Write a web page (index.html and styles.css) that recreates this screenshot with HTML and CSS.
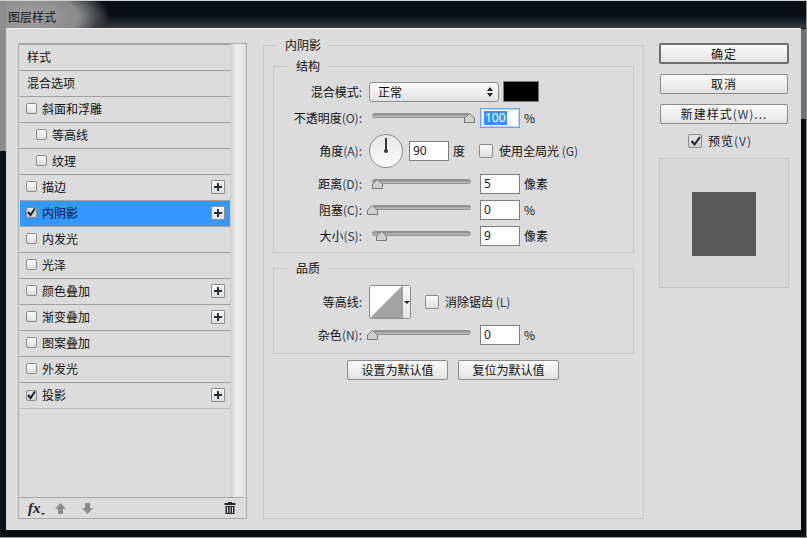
FILE: index.html
```html
<!DOCTYPE html>
<html lang="zh">
<head>
<meta charset="utf-8">
<title>图层样式</title>
<link rel="stylesheet" href="styles.css">
</head>
<body>
<div class="window">
  <div class="titlebar"><span class="title">图层样式</span></div>
  <div class="dialog">
    <aside class="left">
      <div class="list-wrap">
        <ul class="list">
          <li class="row"><span class="t">样式</span></li>
          <li class="row"><span class="t">混合选项</span></li>
          <li class="row"><i class="cb"></i><span>斜面和浮雕</span></li>
          <li class="row sub"><i class="cb"></i><span>等高线</span></li>
          <li class="row sub"><i class="cb"></i><span>纹理</span></li>
          <li class="row"><i class="cb"></i><span>描边</span><b class="plus"></b></li>
          <li class="row active"><i class="cb on"><svg viewBox="0 0 11 11"><path d="M2 5l2.500 3L9 1.500" class="chk"/></svg></i><span>内阴影</span><b class="plus"></b></li>
          <li class="row"><i class="cb"></i><span>内发光</span></li>
          <li class="row"><i class="cb"></i><span>光泽</span></li>
          <li class="row"><i class="cb"></i><span>颜色叠加</span><b class="plus"></b></li>
          <li class="row"><i class="cb"></i><span>渐变叠加</span><b class="plus"></b></li>
          <li class="row"><i class="cb"></i><span>图案叠加</span></li>
          <li class="row"><i class="cb"></i><span>外发光</span></li>
          <li class="row"><i class="cb on"><svg viewBox="0 0 11 11"><path d="M2 5l2.500 3L9 1.500" class="chk"/></svg></i><span>投影</span><b class="plus"></b></li>
        </ul>
        <div class="scroll"></div>
      </div>
      <div class="tools">
        <span class="fx">fx</span><i class="fx-caret"></i>
        <svg class="tool-ic up" viewBox="0 0 11 11"><path d="M5.500 0L11 6H8v5H3V6H0z"/></svg>
        <svg class="tool-ic down" viewBox="0 0 11 11"><path d="M5.500 11L11 5H8V0H3v5H0z"/></svg>
        <svg class="tool-ic trash" viewBox="0 0 12 12"><path d="M4 0h4v1h3.500v2H.5V1H4zM1.500 4h9v8h-9zM3 5v6h1V5zm2.500 0v6h1V5zM8 5v6h1V5z" fill-rule="evenodd"/></svg>
      </div>
    </aside>

    <main class="main">
      <fieldset class="group outer">
        <legend>内阴影</legend>
        <fieldset class="group structure">
          <legend>结构</legend>
          <div class="form-row r-blend">
            <label class="lbl">混合模式<em>:</em></label>
            <div class="select"><span>正常</span><svg class="updown" viewBox="0 0 6 10"><path d="M3 0l3 4H0zM3 10L0 6h6z"/></svg></div>
            <div class="swatch"></div>
          </div>
          <div class="form-row r-opacity">
            <label class="lbl">不透明度<em>(O):</em></label>
            <div class="slider"><svg class="thumb" style="left:100%" viewBox="0 0 11 10"><path d="M5.500.5l5 4.500v4.500H.5V5z"/></svg></div>
            <div class="num focus"><span class="sel">100</span></div>
            <span class="unit">%</span>
          </div>
          <div class="form-row r-angle">
            <label class="lbl">角度<em>(A):</em></label>
            <div class="dial"><i class="needle"></i></div>
            <div class="num">90</div>
            <span class="unit">度</span>
            <i class="cb big"></i>
            <span class="check-text">使用全局光 <em>(G)</em></span>
          </div>
          <div class="form-row r-dist">
            <label class="lbl">距离<em>(D):</em></label>
            <div class="slider"><svg class="thumb" style="left:5%" viewBox="0 0 11 10"><path d="M5.500.5l5 4.500v4.500H.5V5z"/></svg></div>
            <div class="num">5</div>
            <span class="unit">像素</span>
          </div>
          <div class="form-row r-tight">
            <label class="lbl">阻塞<em>(C):</em></label>
            <div class="slider"><svg class="thumb" style="left:0%" viewBox="0 0 11 10"><path d="M5.500.5l5 4.500v4.500H.5V5z"/></svg></div>
            <div class="num">0</div>
            <span class="unit">%</span>
          </div>
          <div class="form-row r-tight">
            <label class="lbl">大小<em>(S):</em></label>
            <div class="slider"><svg class="thumb" style="left:9%" viewBox="0 0 11 10"><path d="M5.500.5l5 4.500v4.500H.5V5z"/></svg></div>
            <div class="num">9</div>
            <span class="unit">像素</span>
          </div>
        </fieldset>
        <fieldset class="group quality">
          <legend>品质</legend>
          <div class="form-row r-contour">
            <label class="lbl">等高线<em>:</em></label>
            <div class="contour">
              <svg class="curve" viewBox="0 0 32 32"><rect width="32" height="32" fill="#fff"/><path d="M0 32L32 0v32z" fill="#a3a3a3"/></svg>
              <div class="caret-box"><i class="caret"></i></div>
            </div>
            <i class="cb big"></i>
            <span class="check-text">消除锯齿 <em>(L)</em></span>
          </div>
          <div class="form-row r-noise">
            <label class="lbl">杂色<em>(N):</em></label>
            <div class="slider"><svg class="thumb" style="left:0%" viewBox="0 0 11 10"><path d="M5.500.5l5 4.500v4.500H.5V5z"/></svg></div>
            <div class="num">0</div>
            <span class="unit">%</span>
          </div>
        </fieldset>
        <div class="defaults">
          <button class="btn def">设置为默认值</button>
          <button class="btn def">复位为默认值</button>
        </div>
      </fieldset>
    </main>

    <aside class="right">
      <button class="btn action primary">确定</button>
      <button class="btn action">取消</button>
      <button class="btn action">新建样式<em>(W)...</em></button>
      <div class="preview-check"><i class="cb big on"><svg viewBox="0 0 13 13"><path d="M2.500 6l3 3.500L11 2" class="chk"/></svg></i><span>预览<em>(V)</em></span></div>
      <div class="preview"><div class="sample"></div></div>
    </aside>
  </div>
</div>
</body>
</html>
```

FILE: styles.css
```css
* { box-sizing: border-box; }
html, body { margin: 0; padding: 0; }
body {
  width: 807px;
  height: 538px;
  overflow: hidden;
  background: #0a0f14;
  font: 12px/16px "Noto Sans CJK SC", "Noto Sans", sans-serif;
  color: #111;
}
em { font-style: normal; color: #2a3a55; }

.window {
  width: 807px;
  height: 538px;
  padding: 1px 1px 1px 0;
  display: flex;
  flex-direction: column;
  border-top: 1px solid #cfd2d4;
  border-right: 1px solid #8c8f92;
  border-bottom: 1px solid #9a9c9e;
  background:
    linear-gradient(90deg, #8d8d8d 0, #8d8d8d 6px, #0000 6px) 0 0 / 100% 150px no-repeat,
    linear-gradient(90deg, #0000 800px, #6f7274 800px) 0 28px / 100% 90px no-repeat,
    radial-gradient(ellipse 82px 36px at 28px 16px, #a0a0a0 0, #8a8a8a 62%, #3c4045 86%, #0000 100%) 0 0 / 240px 29px no-repeat,
    linear-gradient(#0a0f14 0, #0a0f14 14px, #1a222a 20px, #343c44 27px, #0a0f14 27px);
}
.titlebar {
  height: 26px;
  flex: none;
  padding: 7px 0 0 8px;
}
.title { font-size: 12px; line-height: 16px; color: #10151a; display: block; }

.dialog {
  margin: 0 5px 6px 7px;
  flex: 1;
  display: flex;
  align-items: flex-start;
  padding: 14px 10px 0 11px;
  background: #dcdcdc;
  border-top: 1px solid #f0f0f0;
  border-bottom: 1px solid #e4e4e4;
  box-shadow: -1px 0 0 #d8d8d8, 1px 0 0 #d8d8d8;
}

/* left */
.left {
  width: 229px;
  height: 476px;
  flex: none;
  display: flex;
  flex-direction: column;
  border: 1px solid #a8a8a8;
  padding: 0 3px 0 1px;
}
.list-wrap { flex: 1; display: flex; min-height: 0; }
.list {
  width: 211px;
  flex: none;
  margin: 0;
  padding: 0;
  list-style: none;
  border-right: 1px solid #cfcfcf;
}
.row {
  height: 26px;
  display: flex;
  align-items: center;
  gap: 5px;
  padding: 0 5px 2px 6px;
  border-top: 1px solid #a0a0a0;
  position: relative;
}
.row:last-child { border-bottom: 1px solid #bcbcbc; height: 27px; padding-bottom: 1px; }
.row.sub { padding-left: 16px; }
.row .t { padding-left: 1px; }
.row.active { background: #3399ff; border-top-color: #a0a0a0; color: #08101c; }
.cb {
  display: block;
  flex: none;
  width: 11px;
  height: 11px;
  border: 1px solid #8a8a8a;
  border-radius: 2px;
  background: linear-gradient(#fbfbfb, #dedede);
  position: relative;
}
.cb.on { background: linear-gradient(#e4e4e4, #d0d0d0); }
.cb svg { position: absolute; left: -1px; top: -1px; width: 11px; height: 11px; overflow: visible; }
.cb.big { width: 14px; height: 14px; }
.cb.big svg { width: 13px; height: 13px; left: 0; top: 0; }
.chk { fill: none; stroke: #1b2230; stroke-width: 2; }
.plus {
  margin-left: auto;
  width: 14px;
  height: 14px;
  border: 1px solid #8e8e8e;
  border-radius: 1px;
  background:
    linear-gradient(#2a3240, #2a3240) center / 8px 2px no-repeat,
    linear-gradient(#2a3240, #2a3240) center / 2px 8px no-repeat,
    linear-gradient(#fafafa, #e0e0e0);
}
.scroll {
  width: 14px;
  flex: none;
  background: linear-gradient(90deg, #d4d4d4, #f0f0f0 45%, #dedede);
  margin-left: 0;
}
.tools {
  height: 21px;
  flex: none;
  border-top: 1px solid #a8a8a8;
  display: flex;
  align-items: center;
  padding-left: 8px;
  margin-right: -1px;
}
.fx { font: italic bold 15px/14px "Liberation Serif", serif; color: #1e2228; width: 12px; }
.fx-caret { width: 0; height: 0; border: 2px solid transparent; border-top-color: #222; border-bottom: 0; margin: 11px 0 0 1px; }
.tool-ic { width: 11px; height: 11px; fill: #8a8a8a; flex: none; }
.tool-ic.up { margin-left: 10px; }
.tool-ic.down { margin-left: 16px; }
.tool-ic.trash { margin-left: auto; margin-right: 8px; width: 12px; height: 12px; fill: #262a30; }

/* main */
.main { width: 380px; margin-left: 16px; flex: none; height: 476px; }
.group { margin: 0; min-width: 0; border: 1px solid #c6c6c6; }
.group legend { margin-left: 14px; padding: 0 8px; height: 16px; line-height: 16px; font-size: 12px; }
.outer { width: 381px; height: 482px; margin-top: -6px; padding: 5px 9px 0 9px; }
.outer > legend { margin-left: 4px; }
.structure { width: 361px; height: 195px; padding: 0; }
.quality { width: 361px; height: 94px; margin-top: 7px; padding: 0; }

.form-row { display: flex; align-items: center; height: 20px; }
.lbl { width: 88px; flex: none; text-align: right; margin-right: 7px; white-space: nowrap; }
.r-blend { height: 21px; margin-top: 7px; }
.r-opacity { margin-top: 6px; }
.r-angle { height: 34px; margin-top: 6px; }
.r-dist { margin-top: 6px; }
.r-tight { margin-top: 6px; }
.r-contour { height: 34px; margin-top: 9px; }
.r-noise { margin-top: 6px; }

.select {
  width: 130px;
  height: 20px;
  display: flex;
  align-items: center;
  justify-content: space-between;
  padding: 0 5px 0 8px;
  border: 1px solid #8c8c8c;
  border-radius: 3px;
  background: linear-gradient(#fbfbfb, #e2e2e2);
}
.updown { width: 6px; height: 10px; fill: #222; }
.swatch { width: 36px; height: 21px; margin-left: 4px; background: #000; border: 1px solid #7c7c7c; }

.slider {
  width: 99px;
  height: 5px;
  margin: 0 9px 0 3px;
  flex: none;
  position: relative;
  top: -3px;
  border-radius: 3px;
  border: 1px solid #8e8e8e;
  background: linear-gradient(#8a8a8a, #c4c4c4);
}
.thumb {
  position: absolute;
  top: -1px;
  width: 11px;
  height: 10px;
  margin-left: -6px;
  fill: #d0d0d0;
  stroke: #777;
  stroke-width: 1;
}
.num {
  width: 40px;
  height: 20px;
  flex: none;
  padding-left: 3px;
  line-height: 18px;
  background: #fff;
  border: 1px solid #7e7e7e;
  font-family: "Noto Sans", sans-serif;
  color: #101a30;
}
.num.focus { border: 1px solid #6fa8dc; box-shadow: 0 0 0 1px #b8d4ee inset; padding-left: 3px; }
.sel { background: #3390ff; color: #fff; display: inline-block; height: 14px; line-height: 14px; padding: 0 1px; margin-top: 1px; }
.unit { margin-left: 4px; white-space: nowrap; }

.dial {
  width: 34px;
  height: 34px;
  margin-right: 6px;
  flex: none;
  position: relative;
  border-radius: 50%;
  border: 1px solid #8c8c8c;
  background: linear-gradient(#e6e6e6, #fbfbfb);
}
.needle { position: absolute; left: 15px; top: 3px; width: 2px; height: 14px; background: #333; }
.needle::after { content: ""; position: absolute; left: -1px; bottom: -1px; width: 4px; height: 4px; border-radius: 50%; background: #333; }
.r-angle .cb.big { margin-left: 14px; }
.check-text { margin-left: 6px; white-space: nowrap; }

.contour {
  width: 42px;
  height: 34px;
  flex: none;
  display: flex;
  border: 1px solid #8c8c8c;
  border-radius: 2px;
  overflow: hidden;
  background: #f2f2f2;
}
.curve { width: 32px; height: 32px; flex: none; display: block; }
.caret-box { flex: 1; display: flex; align-items: center; justify-content: center; background: linear-gradient(#fafafa, #e4e4e4); border-left: 1px solid #9a9a9a; }
.caret { width: 0; height: 0; border: 3px solid transparent; border-top: 3px solid #222; border-bottom: 0; }
.r-contour .cb.big { margin-left: 14px; }

.defaults { display: flex; gap: 10px; margin: 6px 0 0 74px; }
.btn {
  display: block;
  height: 20px;
  padding: 0;
  font: 12px/16px "Noto Sans CJK SC", "Noto Sans", sans-serif;
  color: #111;
  border: 1px solid #8a8a8a;
  border-radius: 2px;
  background: linear-gradient(#fbfbfb, #e2e2e2);
}
.def { width: 101px; }

/* right */
.right { width: 130px; margin-left: 16px; flex: none; display: flex; flex-direction: column; align-items: center; letter-spacing: 1px; }
.action { width: 128px; margin-bottom: 10px; letter-spacing: 1px; }
.primary { width: 130px; height: 21px; border: 2px solid #6f6f6f; }
.preview-check { align-self: flex-start; margin-left: 29px; display: flex; align-items: center; gap: 6px; height: 14px; }
.preview {
  width: 130px;
  height: 130px;
  margin-top: 10px;
  padding-top: 1px;
  border: 1px solid #c2c2c2;
  display: flex;
  align-items: center;
  justify-content: center;
  background: #d8d8d8;
}
.sample { width: 64px; height: 64px; background: #595959; }
```
